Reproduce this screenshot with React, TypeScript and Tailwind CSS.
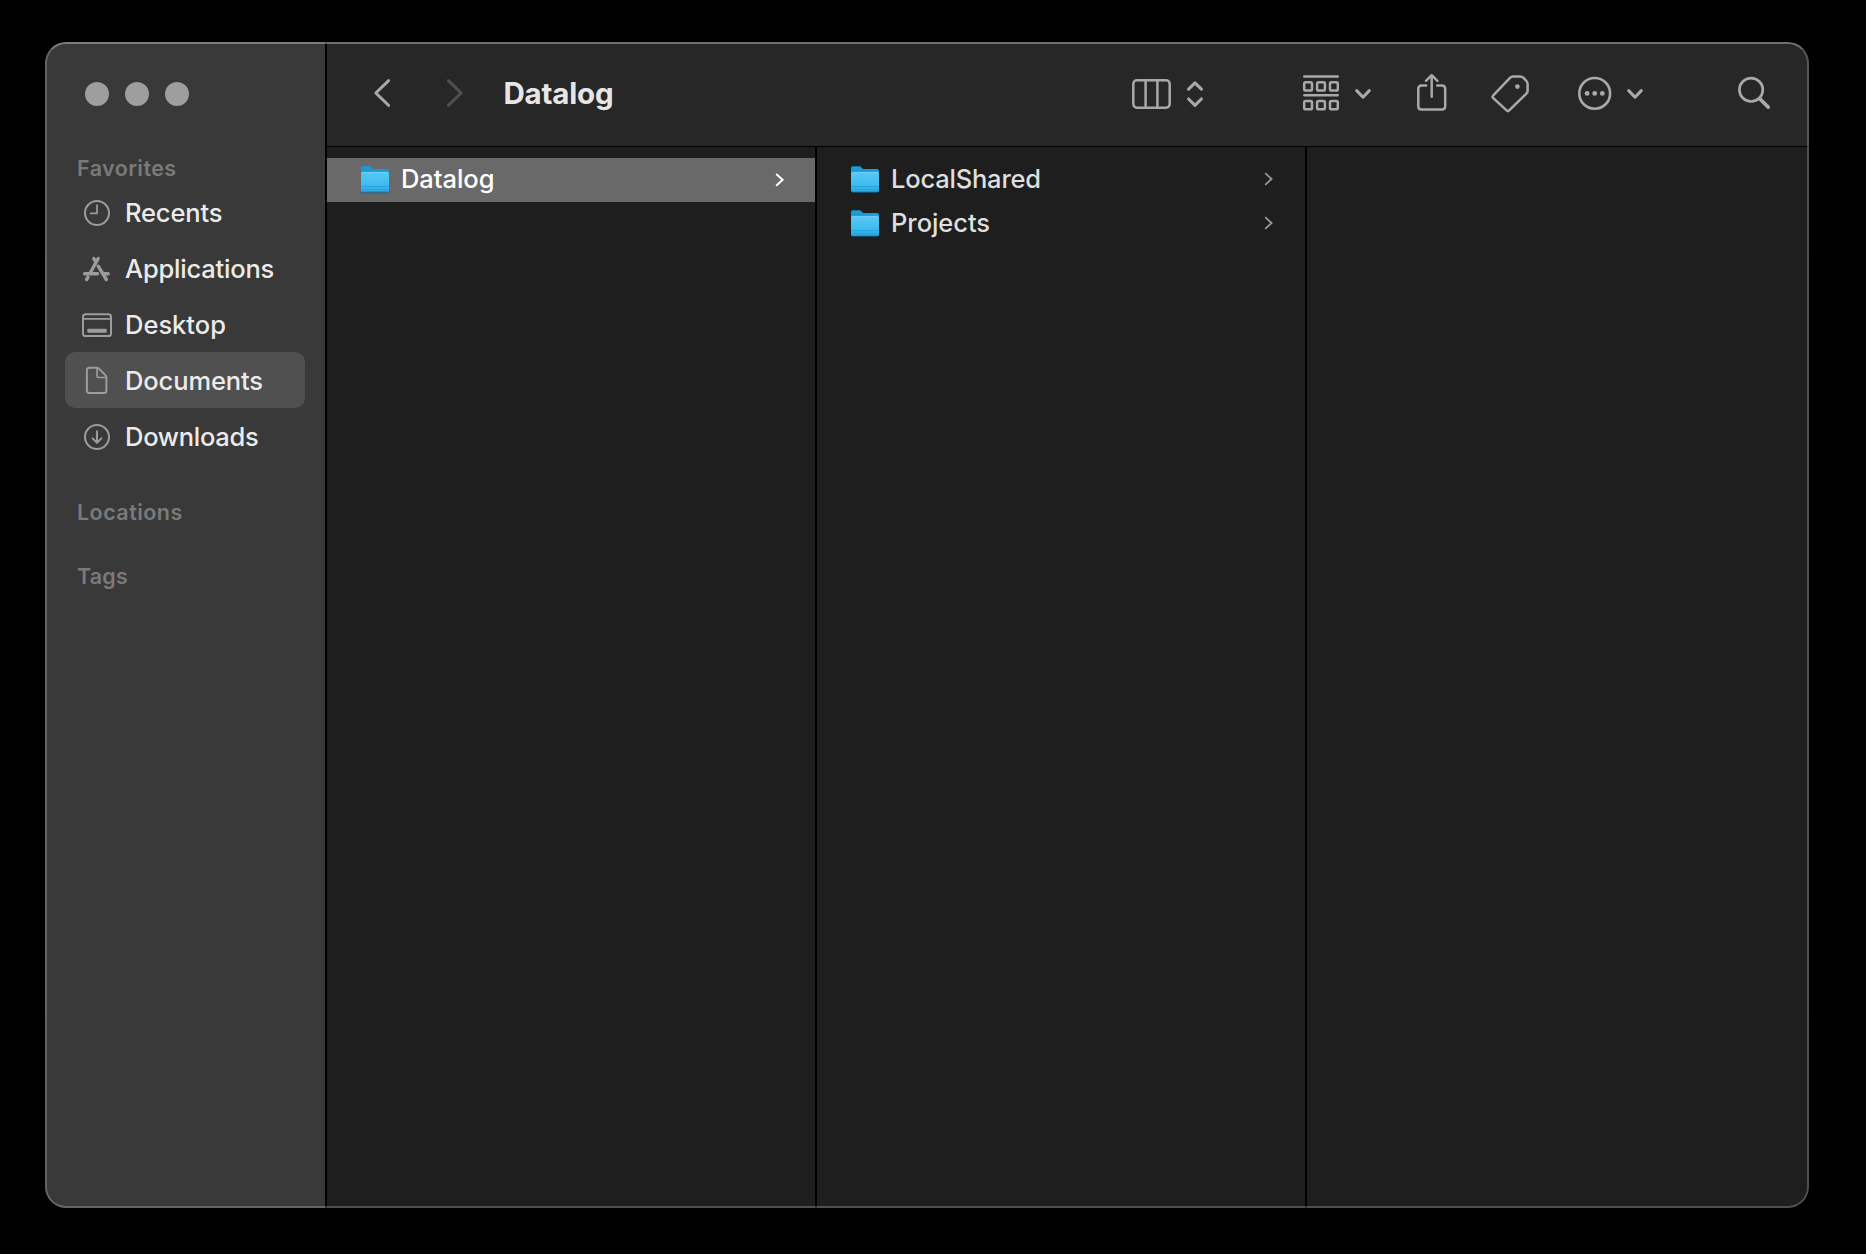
import type { ReactNode } from "react";

function SideIcon({ children }: { children: ReactNode }) {
  return (
    <svg
      viewBox="0 0 32 32"
      fill="none"
      stroke="currentColor"
      strokeWidth={2}
      strokeLinecap="round"
      strokeLinejoin="round"
      className="h-8 w-8 shrink-0 text-[#9c9c9c]"
    >
      {children}
    </svg>
  );
}

const favorites = [
  {
    name: "Recents",
    spacing: "tracking-[-0.14px]",
    icon: (
      <SideIcon>
        <circle cx="16" cy="17" r="12" />
        <path d="M16 9.2V17.3H9.6" strokeWidth={1.7} />
      </SideIcon>
    ),
  },
  {
    name: "Applications",
    spacing: "tracking-[-0.2px]",
    icon: (
      <SideIcon>
        <path d="M17.2 6.5L9.6 20.3M12.8 6.5L14.4 9.3M7 25.2L5.6 27.5M17.2 14.2L25.4 27.5" strokeWidth={3.4} />
        <path d="M3.6 21.7H16.6M22.6 21.7H27.2" strokeWidth={3.4} />
      </SideIcon>
    ),
  },
  {
    name: "Desktop",
    spacing: "tracking-[0px]",
    icon: (
      <SideIcon>
        <rect x="2" y="6.2" width="28" height="21.8" rx="2.6" />
        <path d="M2.5 10.8H29.5" strokeWidth={1.7} />
        <rect x="6.3" y="20.8" width="19.4" height="4" rx="1" fill="currentColor" stroke="none" />
      </SideIcon>
    ),
  },
  {
    name: "Documents",
    spacing: "tracking-[-0.12px]",
    selected: true,
    icon: (
      <SideIcon>
        <path d="M8.2 3.7H15.8C16.6 3.7 17.2 3.9 17.8 4.5L24.6 11.4C25.2 12 25.4 12.6 25.4 13.4V26.4Q25.4 28.9 22.9 28.9H8.4Q5.9 28.9 5.9 26.4V6.2Q5.9 3.7 8.2 3.7Z" />
        <path d="M16 4V11.9Q16 13.5 17.6 13.5H25" strokeWidth={1.7} />
      </SideIcon>
    ),
  },
  {
    name: "Downloads",
    spacing: "tracking-[-0.27px]",
    icon: (
      <SideIcon>
        <circle cx="16" cy="17" r="12" />
        <path d="M16 11.3V22.4M11.6 18.4L16 22.7L20.4 18.4" />
      </SideIcon>
    ),
  },
];

function Folder({ id }: { id: string }) {
  return (
    <svg viewBox="0 0 30 30" className="h-[30px] w-[30px] shrink-0">
      <defs>
        <linearGradient id={id} x1="0" y1="0" x2="0" y2="1">
          <stop offset="0" stopColor="#5ac8f5" />
          <stop offset="0.65" stopColor="#3dbbf0" />
          <stop offset="1" stopColor="#2ba9e2" />
        </linearGradient>
      </defs>
      <rect x="1.2" y="8" width="27.6" height="20.3" rx="1.6" fill="#000" opacity="0.3" />
      <path d="M1 3Q1 1.2 2.8 1.2H9.4C11.6 1.2 11.8 4 14 4H27.2Q29 4 29 5.8V12H1Z" fill="#1a9bd8" />
      <rect x="1" y="7" width="28" height="20.2" rx="1.6" fill={`url(#${id})`} />
      <path d="M2 7.4H28" stroke="#7ad4fb" strokeWidth="0.7" />
      <path d="M1 21.5H29M1 24.5H29" stroke="#2299d6" strokeWidth="0.7" />
      <path d="M2 26.8H28" stroke="#1489c6" strokeWidth="0.9" />
    </svg>
  );
}

function FileRow({ name, selected, spacing }: { name: string; selected?: boolean; spacing: string }) {
  return (
    <div
      className={`flex h-11 items-center pl-[33px] ${
        selected ? "bg-[#696969] pr-[29px] text-white" : "pr-[30px] text-[#dfdfdf]"
      }`}
    >
      <Folder id={`folder-${name}`} />
      <span className={`ml-[11px] pb-0.5 text-[25.5px] font-[450] leading-[42px] ${spacing}`}>{name}</span>
      <svg
        viewBox="0 0 12 16"
        fill="none"
        stroke="currentColor"
        strokeWidth={selected ? 2 : 1.8}
        className={`ml-auto h-4 w-3 ${selected ? "text-white" : "text-[#999999]"}`}
      >
        <path d={selected ? "M2.2 1.9L8.6 7.8L2.2 13.7" : "M2.2 1.1L8.6 7L2.2 12.9"} />
      </svg>
    </div>
  );
}

function Tool({ w, className, children }: { w: number; className: string; children: ReactNode }) {
  return (
    <svg
      width={w}
      height={48}
      viewBox={`0 0 ${w} 48`}
      fill="none"
      stroke="currentColor"
      strokeWidth={2.5}
      strokeLinecap="round"
      strokeLinejoin="round"
      className={`shrink-0 ${className}`}
    >
      {children}
    </svg>
  );
}

function Label({ children, className }: { children: ReactNode; className: string }) {
  return (
    <div className={`pl-8 text-[21.5px] font-semibold leading-8 text-[#7a7a7a] ${className}`}>{children}</div>
  );
}

export default function App() {
  return (
    <div className="h-[1254px] w-[1866px] overflow-hidden bg-black pl-[45px] pt-[42px] font-['Inter',sans-serif]">
      <div className="relative flex h-[1166px] w-[1764px] overflow-hidden rounded-[21px] bg-[#1e1e1e]">
        <aside className="w-[282px] shrink-0 border-r-2 border-black bg-[#393939]">
          <div className="flex gap-4 pl-10 pt-10">
            <span className="h-6 w-6 rounded-full bg-[#9e9e9e]" />
            <span className="h-6 w-6 rounded-full bg-[#9e9e9e]" />
            <span className="h-6 w-6 rounded-full bg-[#9e9e9e]" />
          </div>
          <Label className="mt-[46px] tracking-[0.42px]">Favorites</Label>
          <nav className="px-5">
            {favorites.map((f) => (
              <div
                key={f.name}
                className={`flex h-14 items-center rounded-[10px] pl-4 ${f.selected ? "bg-[#505050]" : ""}`}
              >
                {f.icon}
                <span className={`ml-3 pt-0.5 text-[25.5px] font-[460] leading-[42px] text-[#ebebeb] ${f.spacing}`}>
                  {f.name}
                </span>
              </div>
            ))}
          </nav>
          <Label className="mt-8 tracking-[0.46px]">Locations</Label>
          <Label className="mt-8 tracking-[0.2px]">Tags</Label>
        </aside>

        <main className="flex min-w-0 flex-1 flex-col">
          <header className="flex h-[105px] shrink-0 items-center border-b border-black bg-[#272727] pr-[37px] text-[#a9a9a9]">
            <Tool w={20} className="ml-[45px]">
              <path d="M16.6 10.6L3.8 23L16.6 35.4" strokeWidth={2.9} />
            </Tool>
            <Tool w={20} className="ml-[53px] text-[#505050]">
              <path d="M3.4 10.6L16.2 23L3.4 35.4" strokeWidth={2.9} />
            </Tool>
            <h1 className="ml-[38.5px] pb-0.5 text-[29.5px] font-bold tracking-[-0.2px] text-[#e6e6e6]">Datalog</h1>

            <Tool w={44} className="ml-auto">
              <rect x="3.3" y="10.3" width="36.4" height="27.4" rx="3.6" />
              <path d="M15.6 10.5V37.5M27.4 10.5V37.5" />
            </Tool>
            <Tool w={20} className="ml-[11px]">
              <path d="M3.6 19.2L10 12.8L16.4 19.2M3.6 29L10 35.4L16.4 29" strokeWidth={3.1} />
            </Tool>
            <Tool w={42} className="ml-[95px]">
              <path d="M4.3 6.5H37.7M4.3 25.3H37.7" />
              <rect x="4.2" y="12.2" width="7.8" height="8.4" rx="1.6" />
              <rect x="17.1" y="12.2" width="7.8" height="8.4" rx="1.6" />
              <rect x="30" y="12.2" width="7.8" height="8.4" rx="1.6" />
              <rect x="4.2" y="30.9" width="7.8" height="8.4" rx="1.6" />
              <rect x="17.1" y="30.9" width="7.8" height="8.4" rx="1.6" />
              <rect x="30" y="30.9" width="7.8" height="8.4" rx="1.6" />
            </Tool>
            <Tool w={20} className="ml-[11px]">
              <path d="M3.7 20.6L10 27.2L16.3 20.6" strokeWidth={3.1} />
            </Tool>
            <Tool w={34} className="ml-[42px]">
              <path d="M11.2 15.6H6.6Q3.3 15.6 3.3 18.9V36.3Q3.3 39.6 6.6 39.6H26.9Q30.2 39.6 30.2 36.3V18.9Q30.2 15.6 26.9 15.6H22.2" />
              <path d="M16.7 26.8V5.4M11 10.9L16.7 5.2L22.4 10.9" />
            </Tool>
            <Tool w={42} className="ml-10">
              <path d="M24.2 6.4H31Q33 6.4 34.3 7.7L37.4 11Q38.6 12.3 38.6 14.2V20.8Q38.6 22.5 37.4 23.7L20.2 40.4Q18.9 41.7 17.6 40.4L4.3 28.2Q2.9 26.8 4.3 25.3L21.2 7.7Q22.4 6.4 24.2 6.4Z" />
              <circle cx="28.4" cy="16.6" r="2.3" fill="currentColor" stroke="none" />
            </Tool>
            <Tool w={38} className="ml-[45px]">
              <circle cx="18.7" cy="23.4" r="15.4" strokeWidth={2.6} />
              <g fill="currentColor" stroke="none">
                <circle cx="11.1" cy="23.4" r="2.4" />
                <circle cx="18.7" cy="23.4" r="2.4" />
                <circle cx="26.3" cy="23.4" r="2.4" />
              </g>
            </Tool>
            <Tool w={20} className="ml-[11px]">
              <path d="M3.7 20.6L10 27.2L16.3 20.6" strokeWidth={3.1} />
            </Tool>
            <Tool w={36} className="ml-[91px]">
              <circle cx="15.1" cy="19.8" r="11.7" strokeWidth={2.7} />
              <path d="M23.8 28.8L32.2 37.1" strokeWidth={3.7} />
            </Tool>
          </header>

          <div className="flex min-h-0 flex-1">
            <section className="w-[490px] shrink-0 border-r-2 border-black pt-[11px]">
              <FileRow name="Datalog" selected spacing="tracking-[-0.05px]" />
            </section>
            <section className="w-[490px] shrink-0 border-r-2 border-black pt-[11px]">
              <FileRow name="LocalShared" spacing="tracking-[-0.2px]" />
              <FileRow name="Projects" spacing="tracking-[-0.05px]" />
            </section>
            <section className="flex-1" />
          </div>
        </main>

        <div className="pointer-events-none absolute inset-0 rounded-[21px] border-2 border-white/22 border-t-white/34" />
      </div>
    </div>
  );
}
